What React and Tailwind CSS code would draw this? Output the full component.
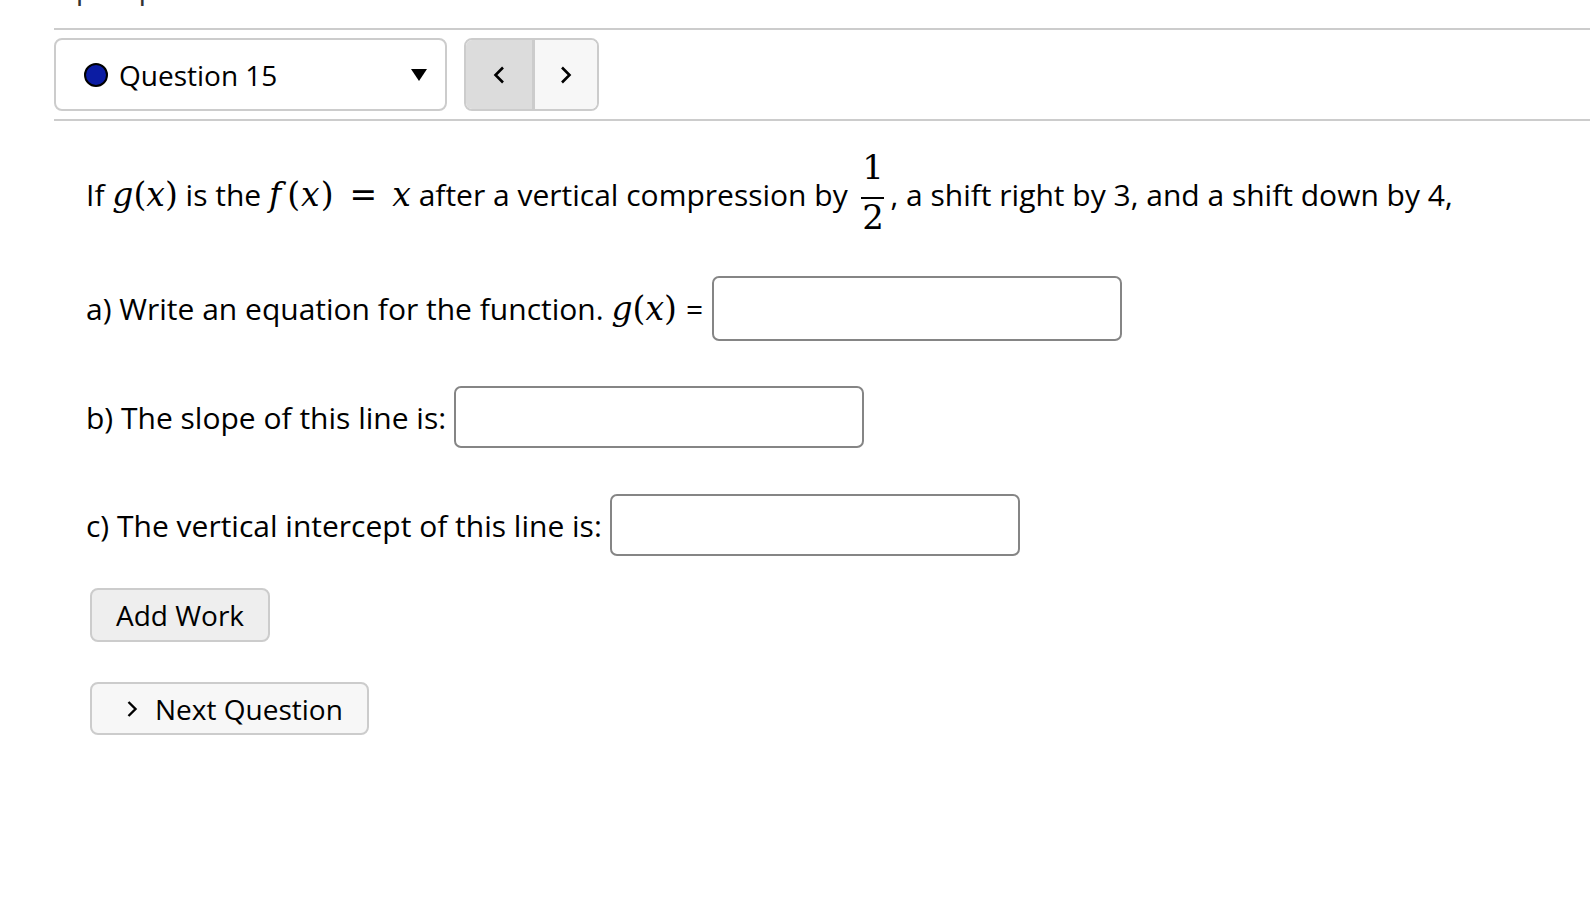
import React from 'react';

const M = ({ children, className = '' }) => (
  <span className={`font-['DejaVu_Serif',serif] text-[33px] leading-none ${className}`}>{children}</span>
);

const Fx = () => (
  <M>
    <i>g</i>(<i>x</i>)
  </M>
);

const AnswerBox = ({ tall }) => (
  <input
    type="text"
    className={`w-[410px] ${tall ? 'h-[65px]' : 'h-[62px]'} rounded-[7px] border-2 border-[#858585] bg-white px-3 text-[30px] outline-none`}
  />
);

const App = () => {
  return (
    <div className="min-h-screen bg-white text-black font-['Open_Sans',sans-serif]">
      <div className="pl-[54px]">
        {/* line from the section above, scrolled mostly out of view */}
        <div className="h-[28px] overflow-hidden">
          <div className="-mt-[27px] text-[30px] leading-[30px] text-[#333]">Up to pass this section</div>
        </div>
        <div className="h-[2px] bg-[#cccccc]" />

        {/* Question selector + prev/next */}
        <div className="flex items-center gap-[17px] mt-[8px]">
          <div className="w-[393px] h-[73px] rounded-[8px] border-2 border-[#cccccc] flex items-center pl-[28px] pr-[18px]">
            <span className="w-[24px] h-[24px] rounded-full bg-[#0b1ca3] border-2 border-black" />
            <span className="ml-[11px] text-[28px]">Question 15</span>
            <svg className="ml-auto w-[16px] h-[12px]" viewBox="0 0 16 12">
              <path d="M0 0 H16 L8 12 Z" fill="#000" />
            </svg>
          </div>
          <div className="flex h-[73px] w-[135px] rounded-[8px] border-2 border-[#cccccc] overflow-hidden">
            <button className="w-[66px] h-full bg-[#dcdcdc] flex items-center justify-center">
              <svg className="w-[14px] h-[18px]" viewBox="0 0 14 18" fill="none" stroke="#000" strokeWidth="2.6">
                <path d="M11 1.5 L3.5 9 L11 16.5" />
              </svg>
            </button>
            <div className="w-[3px] bg-[#cccccc]" />
            <button className="flex-1 h-full bg-[#f7f7f7] flex items-center justify-center">
              <svg className="w-[14px] h-[18px]" viewBox="0 0 14 18" fill="none" stroke="#000" strokeWidth="2.6">
                <path d="M3 1.5 L10.5 9 L3 16.5" />
              </svg>
            </button>
          </div>
        </div>
        <div className="h-[2px] bg-[#cccccc] mt-[8px]" />

        {/* Question body */}
        <div className="pl-[32px] text-[30px]">
          <p className="mt-[28px] leading-[45px]">
            If <Fx /> is the{' '}
            <M>
              <i className="mr-[6px]">f</i>(<i className="mx-[1px]">x</i>)<span className="ml-[16px] mr-[15px]">=</span>
              <i>x</i>
            </M>{' '}
            after a vertical compression by{' '}
            <span className="inline-flex flex-col items-center align-[27px] ml-[6px] mr-[6px] font-['DejaVu_Serif',serif] text-[34px] leading-[36px]">
              <span className="mb-[12px]">1</span>
              <span className="w-[23px] h-[2px] bg-black" />
              <span>2</span>
            </span>
            , a shift right by 3, and a shift down by 4,
          </p>

          <div className="flex items-center mt-[41px]">
            <span>a) Write an equation for the function.&nbsp;</span>
            <Fx />
            <span className="mx-[9px]">=</span>
            <AnswerBox tall />
          </div>

          <div className="flex items-center mt-[45px]">
            <span className="mr-[8px]">b) The slope of this line is:</span>
            <AnswerBox />
          </div>

          <div className="flex items-center mt-[46px]">
            <span className="mr-[8px]">c) The vertical intercept of this line is:</span>
            <AnswerBox />
          </div>

          <div className="ml-[4px]">
            <button className="mt-[32px] w-[180px] h-[54px] rounded-[8px] border-2 border-[#cccccc] bg-[#eeeeee] text-[28px] flex items-center justify-center">
              Add Work
            </button>
            <button className="mt-[40px] w-[279px] h-[53px] rounded-[8px] border-2 border-[#cccccc] bg-[#f7f7f7] text-[28px] flex items-center pl-[34px]">
              <svg className="w-[12px] h-[18px]" viewBox="0 0 12 18" fill="none" stroke="#000" strokeWidth="2.4">
                <path d="M2.5 2 L9.5 9 L2.5 16" />
              </svg>
              <span className="ml-[17px]">Next Question</span>
            </button>
          </div>
        </div>
      </div>
    </div>
  );
};

export default App;
